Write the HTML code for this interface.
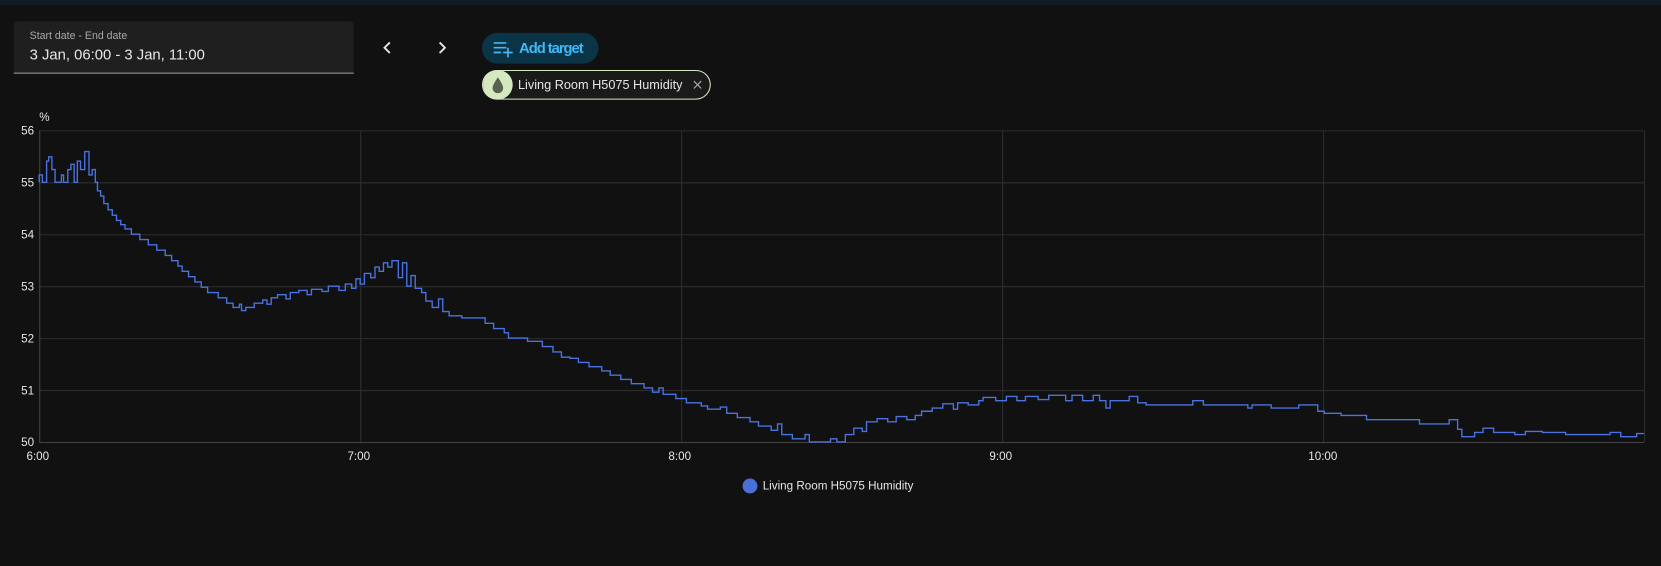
<!DOCTYPE html>
<html><head><meta charset="utf-8"><style>
html,body{margin:0;padding:0;background:#111111;width:1661px;height:566px;overflow:hidden}
svg{display:block}
text{font-family:"Liberation Sans",sans-serif}
</style></head><body>
<svg width="1661" height="566" viewBox="0 0 1568 534" preserveAspectRatio="none">
<rect width="1568" height="534" fill="#111111"/>
<rect width="1568" height="5" fill="#0f1c24"/>
<path d="M13 24 a4 4 0 0 1 4 -4 H330 a4 4 0 0 1 4 4 V69 H13 Z" fill="#1f1f1f"/>
<rect x="13" y="68.5" width="321" height="1" fill="#9a9a9a"/>
<text x="28" y="37" font-size="10" fill="#a8a8a8">Start date - End date</text>
<text x="28" y="56" font-size="14" fill="#e6e6e6">3 Jan, 06:00 - 3 Jan, 11:00</text>
<path d="M368 40 L363 45 L368 50" stroke="#e6e6e6" stroke-width="1.8" fill="none"/>
<path d="M415 40 L420 45 L415 50" stroke="#e6e6e6" stroke-width="1.8" fill="none"/>
<rect x="455" y="31" width="110" height="29" rx="14.5" fill="#0c3447"/>
<g stroke="#3fb8f5" stroke-width="1.6">
<path d="M466 40.5 H478 M466 45 H478 M466 49.5 H473 M475 49.5 H484 M479.5 45 V54"/>
</g>
<text x="490" y="50" font-size="14" font-weight="bold" fill="#3fb8f5" textLength="61">Add target</text>
<rect x="455.5" y="66.5" width="215" height="27" rx="13.5" fill="#1a1a1a" stroke="#d6e8c0"/>
<circle cx="470" cy="80" r="14" fill="#d6e8c0"/>
<path d="M470 73 Q465 80 465 83 a5 5 0 0 0 10 0 Q475 80 470 73z" fill="#5a6150"/>
<text x="489" y="84" font-size="12" fill="#e6e6e6">Living Room H5075 Humidity</text>
<path d="M655 76.5 L662 83.5 M662 76.5 L655 83.5" stroke="#aaa" stroke-width="1.1"/>
<g stroke="#2e2e2e" stroke-width="1">
<path d="M37 123.5 H1552 M37 172.5 H1552 M37 221.5 H1552 M37 270.5 H1552 M37 319.5 H1552 M37 368.5 H1552"/>
<path d="M340.5 123 V417 M643.5 123 V417 M946.5 123 V417 M1249.5 123 V417 M1552.5 123 V417"/>
</g>
<path d="M37 417.5 H1552 M37.5 123 V417" stroke="#444" stroke-width="1"/>
<g font-size="11" fill="#e6e6e6">
<text x="37" y="114">%</text>
<text x="20" y="127">56</text><text x="20" y="176">55</text><text x="20" y="225">54</text>
<text x="20" y="274">53</text><text x="20" y="323">52</text><text x="20" y="372">51</text>
<text x="20" y="421">50</text>
<text x="25" y="434">6:00</text><text x="328" y="434">7:00</text><text x="631" y="434">8:00</text>
<text x="934" y="434">9:00</text><text x="1235" y="434">10:00</text>
<text x="720" y="462">Living Room H5075 Humidity</text>
</g>
<circle cx="708" cy="458.5" r="7" fill="#4a6fd8"/>
<path fill="none" stroke="#4a72e0" stroke-width="1.3" d="M37 172 V165 H40 V172 H44 V152 H46 V148 H49 V160 H52 V172 H58 V165 H60 V172 H64 V160 H67 V155 H70 V172 H73 V152 H76 V160 H80 V143 H84 V165 H87 V160 H90 V172 H92 V180 H95 V185 H98 V192 H102 V198 H106 V203 H110 V208 H114 V212 H118 V216 H124 V221 H132 V226 H140 V231 H148 V236 H156 V241 H162 V246 H168 V251 H172 V256 H178 V261 H184 V266 H190 V271 H196 V276 H206 V281 H214 V286 H220 V290 H226 V287 H228 V293 H232 V290 H240 V286 H248 V283 H252 V287 H256 V281 H262 V278 H270 V282 H274 V276 H282 V274 H290 V278 H294 V273 H304 V275 H310 V270 H320 V274 H326 V268 H332 V272 H336 V263 H340 V268 H344 V258 H350 V262 H354 V252 H358 V256 H362 V248 H366 V252 H370 V246 H376 V262 H380 V248 H384 V270 H388 V260 H392 V272 H398 V276 H402 V284 H408 V290 H414 V282 H418 V294 H424 V298 H436 V300 H458 V305 H466 V310 H476 V314 H480 V319 H498 V322 H512 V327 H522 V332 H530 V337 H538 V338 H546 V342 H556 V346 H568 V350 H576 V354 H586 V358 H596 V362 H608 V366 H616 V370 H622 V366 H626 V372 H638 V376 H648 V380 H662 V383 H668 V386 H680 V384 H686 V390 H696 V394 H708 V398 H716 V402 H728 V406 H734 V400 H738 V410 H748 V414 H760 V410 H764 V417 H772 V417 H784 V414 H790 V417 H798 V410 H806 V404 H814 V407 H818 V398 H828 V395 H838 V398 H846 V393 H856 V396 H864 V392 H870 V388 H880 V385 H890 V381 H900 V386 H904 V380 H914 V382 H924 V378 H928 V375 H940 V378 H950 V374 H960 V378 H968 V374 H980 V377 H990 V373 H1006 V378 H1012 V373 H1022 V378 H1032 V373 H1038 V378 H1044 V385 H1048 V378 H1066 V374 H1074 V380 H1082 V382 H1126 V378 H1136 V382 H1178 V385 H1182 V382 H1200 V385 H1226 V382 H1244 V388 H1250 V390 H1266 V392 H1290 V396 H1340 V400 H1368 V396 H1376 V405 H1380 V412 H1392 V408 H1400 V404 H1410 V408 H1430 V410 H1440 V407 H1456 V408 H1478 V410 H1520 V408 H1530 V412 H1545 V409 H1552"/>
</svg>
</body></html>
